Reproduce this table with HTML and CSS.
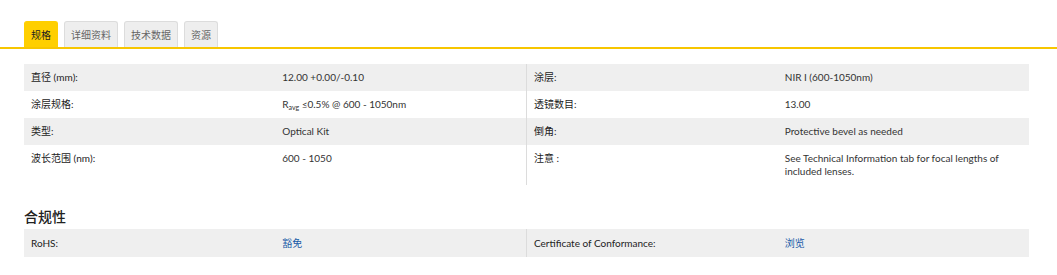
FILE: index.html
```html
<!DOCTYPE html>
<html lang="zh">
<head>
<meta charset="utf-8">
<link rel="stylesheet" href="styles.css">
</head>
<body>
<div class="tabbar">
  <ul class="tabs">
    <li class="tab active">规格</li>
    <li class="tab">详细资料</li>
    <li class="tab">技术数据</li>
    <li class="tab">资源</li>
  </ul>
</div>
<div class="content">
  <table class="specs">
    <colgroup><col><col><col><col></colgroup>
    <tr class="odd">
      <td class="lbl">直径 (mm):</td><td>12.00 +0.00/-0.10</td>
      <td class="lbl split">涂层:</td><td>NIR I (600-1050nm)</td>
    </tr>
    <tr>
      <td class="lbl">涂层规格:</td><td>R<sub>avg</sub> ≤0.5% @ 600 - 1050nm</td>
      <td class="lbl split">透镜数目:</td><td>13.00</td>
    </tr>
    <tr class="odd">
      <td class="lbl">类型:</td><td>Optical Kit</td>
      <td class="lbl split">倒角:</td><td>Protective bevel as needed</td>
    </tr>
    <tr>
      <td class="lbl">波长范围 (nm):</td><td>600 - 1050</td>
      <td class="lbl split">注意 :</td><td>See Technical Information tab for focal lengths of included lenses.</td>
    </tr>
  </table>
  <h2 class="heading">合规性</h2>
  <table class="specs compliance">
    <colgroup><col><col><col><col></colgroup>
    <tr class="odd">
      <td class="lbl">RoHS:</td><td><a class="link" href="#">豁免</a></td>
      <td class="lbl split">Certificate of Conformance:</td><td><a class="link" href="#">浏览</a></td>
    </tr>
  </table>
</div>
</body>
</html>
```
FILE: styles.css
```css
html, body {
  margin: 0;
  padding: 0;
  background: #fff;
}
body {
  font-family: Lato, "Noto Sans CJK SC", sans-serif;
  font-size: 10px;
  color: #222;
}
.tabbar {
  padding-top: 21px;
  border-bottom: 2px solid #f7c600;
}
.tabs {
  list-style: none;
  margin: 0;
  padding: 0 0 0 24px;
  display: flex;
  gap: 6px;
}
.tab {
  padding: 6px 6px 5px;
  line-height: 14px;
  background: #eeeeee;
  border: 1px solid #dcdcdc;
  border-bottom: none;
  border-radius: 3px 3px 0 0;
  color: #666;
}
.tab.active {
  background: #ffcf00;
  border-color: #ffcf00;
  color: #222;
}
.content {
  padding: 15px 28px 0 24px;
}
.specs {
  width: 1005px;
  border-collapse: collapse;
  table-layout: fixed;
}
.specs td {
  padding: 7px 7px;
  line-height: 13px;
  vertical-align: top;
  color: #333;
}
.compliance td {
  padding: 8px 7px 7px;
}
.specs td.lbl {
  color: #222;
}
.specs td.split {
  border-left: 1px solid #dcdcdc;
}
.specs tr.odd td {
  background: #efefef;
}
.specs sub {
  font-size: 7px;
  vertical-align: -2px;
  line-height: 0;
}
.heading {
  margin: 23px 0 4px;
  font-size: 14px;
  line-height: 17px;
  font-weight: 500;
  color: #222;
}
.link {
  color: #1a5ca8;
  text-decoration: none;
}
```
